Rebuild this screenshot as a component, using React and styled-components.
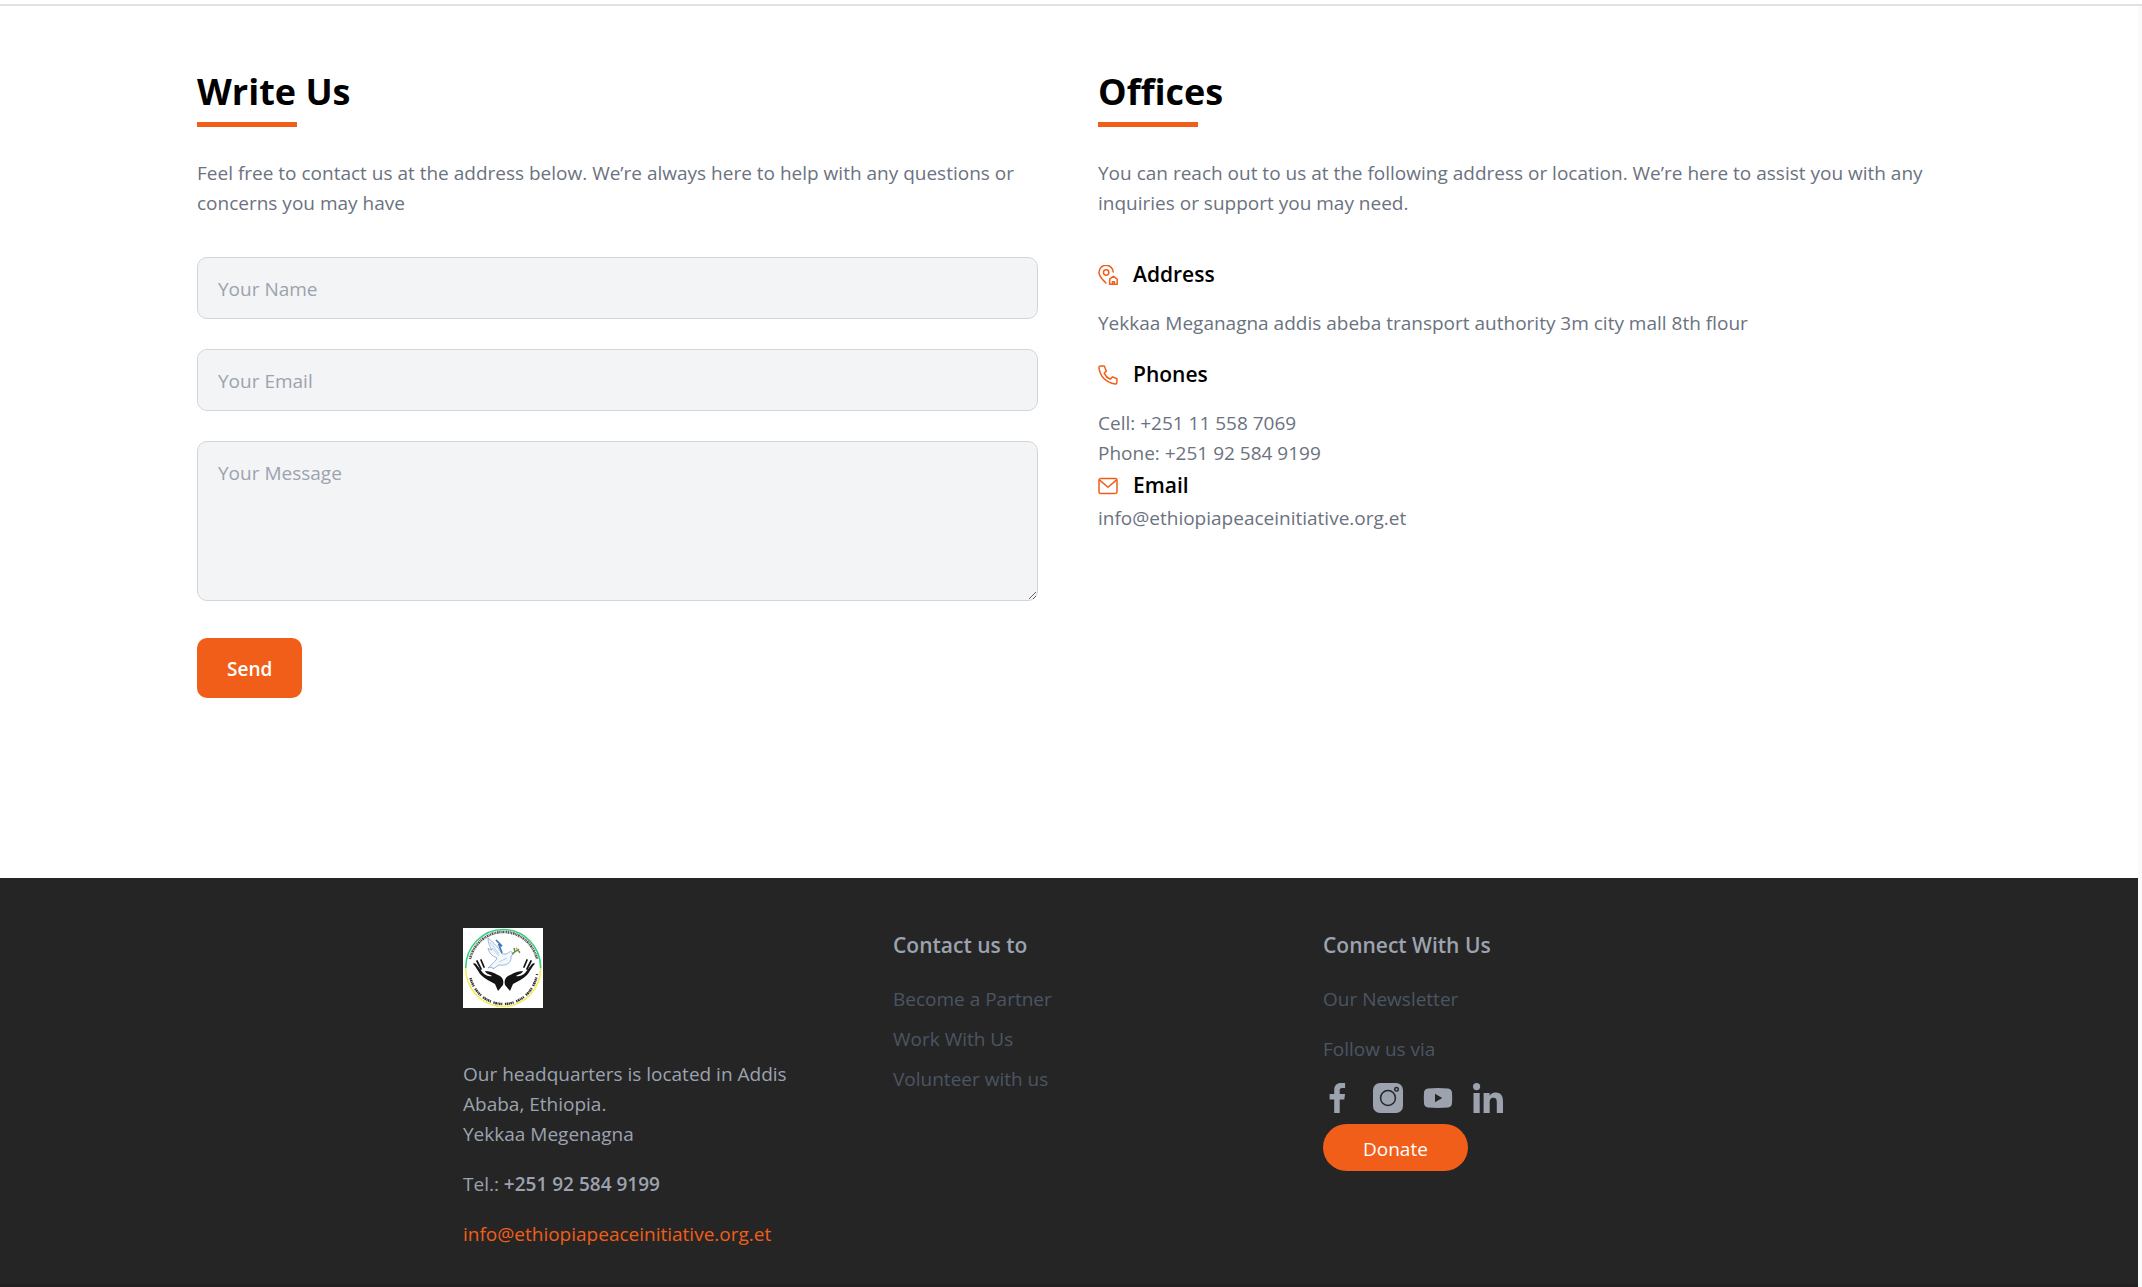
import React from "react";
import styled, { createGlobalStyle } from "styled-components";

const ORANGE = "#f15e19";

const GlobalStyle = createGlobalStyle`
  *, *::before, *::after { box-sizing: border-box; }
  body {
    margin: 0;
    background: #fff;
    font-family: "Segoe UI", "Open Sans", "Noto Sans", sans-serif;
    font-size: 19px;
    line-height: 30px;
  }
  h2, h3, p, ul { margin: 0; padding: 0; }
  input, textarea, button { font: inherit; }
  a { color: inherit; text-decoration: none; }
`;

const Page = styled.div`
  min-height: 100vh;
  display: flex;
  flex-direction: column;
`;

const TopRule = styled.div`
  height: 6px;
  border-bottom: 2px solid #e1e1e1;
`;

const Body = styled.div`
  flex: 1;
  display: flex;
  flex-direction: column;
  border-right: 4px solid #fafafa;
`;

const Contact = styled.main`
  width: 100%;
  max-width: 1824px;
  margin: 0 auto;
  padding: 61px 42px 180px 40px;
  display: grid;
  grid-template-columns: repeat(auto-fit, minmax(420px, 1fr));
  gap: 60px;
`;

const Title = styled.h2`
  font-size: 36px;
  line-height: 50px;
  font-weight: 700;
  color: #000;
  &::after {
    content: "";
    display: block;
    width: 100px;
    height: 5px;
    margin-top: 5px;
    background: ${ORANGE};
  }
`;

const Intro = styled.p`
  margin: 31px 0 39px;
  color: #6b7280;
`;

const Form = styled.form`
  display: flex;
  flex-direction: column;
  gap: 30px;
`;

const Field = styled.input`
  display: block;
  width: 100%;
  height: ${(p) => (p.$tall ? "160px" : "62px")};
  padding: 16px 20px 14px;
  border: 1px solid #d1d5db;
  border-radius: 10px;
  background: #f3f4f6;
  resize: vertical;
  &::placeholder { color: #9ca3af; opacity: 1; }
`;

const Button = styled.button`
  align-self: flex-start;
  border: 0;
  color: #fff;
  background: ${ORANGE};
  cursor: pointer;
`;

const SendButton = styled(Button)`
  margin-top: 7px;
  height: 60px;
  padding: 2px 30px 0;
  border-radius: 10px;
  font-weight: 600;
`;

const Offices = styled.section`
  color: #6b7280;
`;

const Heading = styled.h3`
  display: flex;
  align-items: center;
  gap: 15px;
  margin-bottom: ${(p) => (p.$tight ? "0" : "16px")};
  font-size: 21px;
  line-height: 35px;
  font-weight: 600;
  color: #000;
  svg { color: ${ORANGE}; }
`;

const Detail = styled.div`
  margin-bottom: ${(p) => (p.$last ? "0" : "19px")};
`;

const Footer = styled.footer`
  flex: 1;
  background: #252525;
  color: #9ca3af;
  border-bottom: 3px solid #231f20;
`;

const FooterGrid = styled.div`
  width: 100%;
  max-width: 1296px;
  margin: 0 auto;
  padding: 50px 40px 32px 42px;
  display: grid;
  grid-template-columns: repeat(auto-fit, minmax(280px, 1fr));
  gap: 76px;
`;

const FooterColumn = styled.div`
  display: flex;
  flex-direction: column;
  align-items: flex-start;
`;

const Logo = styled.svg`
  width: 80px;
  height: 80px;
  margin-bottom: 51px;
`;

const FooterText = styled.p`
  margin-bottom: 20px;
  b { font-weight: 600; }
`;

const MailLink = styled.a`
  && { color: ${ORANGE}; }
`;

const FooterTitle = styled.h3`
  margin: 0 0 21px;
  font-size: 21px;
  line-height: 35px;
  font-weight: 600;
`;

const Links = styled.ul`
  list-style: none;
  display: flex;
  flex-direction: column;
  gap: 10px;
  color: #4b5563;
`;

const Follow = styled.p`
  margin-top: 20px;
  color: #4b5563;
`;

const Social = styled.div`
  display: flex;
  gap: 20px;
  margin: 19px 0 11px;
  a { display: block; width: 30px; height: 30px; }
  svg { display: block; width: 30px; height: 30px; fill: #9ca3af; }
`;

const DonateButton = styled(Button)`
  height: 47px;
  padding: 2px 40px 0;
  border-radius: 24px;
`;

function LineIcon({ children }) {
  return (
    <svg width="20" height="20" viewBox="0 0 24 24" fill="none" stroke="currentColor" strokeWidth="1.8" strokeLinecap="round" strokeLinejoin="round" aria-hidden="true">
      {children}
    </svg>
  );
}

function Emblem() {
  return (
    <Logo viewBox="0 0 80 80" role="img" aria-label="Ethiopia Peace Initiative">
      <rect width="80" height="80" fill="#fff" />
      <path d="M2.700 40a37.500 38.500 0 0 1 75 0" fill="none" stroke="#35d07f" strokeWidth="1.600" />
      <path d="M2.700 40a37.500 38.500 0 0 0 75 0" fill="none" stroke="#f1ee5c" strokeWidth="1.600" />
      <path d="M7 31a34.500 35.500 0 0 1 67 0" fill="none" stroke="#555" strokeWidth="2.600" strokeDasharray="1.100 .7 1.700 .6 .8 .5" />
      <path d="M7.500 50a34 35 0 0 0 66.500-4" fill="none" stroke="#333" strokeWidth="2.400" strokeDasharray="1.400 .5 1.800 .5 1 .5 1.500 .6 1.200 2.600" />
      <path d="M39 26c-3-6-7-10-14-16 0 5 2 9 4 12-1 0-3-1-4-2 1 5 4 8 9 10-1 3-3 4-5 6l-4 4 4-1 1 2 6-4c7 1 12-2 12-7 0-3 2-4 3-4-2-3-5-3-7 0z" fill="#f4f8fc" stroke="#8fb0d3" strokeWidth=".9" />
      <path d="M33 12l6 6-3-1 3 8" fill="none" stroke="#3f75b5" strokeWidth="1.600" />
      <path d="M27 14l9 12M29 20l7 8M36 34l8-4" stroke="#a9c2dd" strokeWidth=".8" fill="none" />
      <path d="M49 26l7-5M52 24l-1-4M54 22l3 2" stroke="#5d943f" strokeWidth="1.500" fill="none" />
      <path d="M53 20l1 1M56 24l1 1" stroke="#d66b43" strokeWidth="1.300" />
      <g id="hand" fill="#141414">
        <path d="M10 36c2 1 4 6 8 11 4 4 9 6 14 9l3 7 5-6c1-4 0-7-3-9-4-2-9-5-15-5 1 3 4 3 7 5-3 1-7-1-9-3l-7-9c-1-1-3-1-3 0z" />
        <path d="M14 33l4 8M18 32l3 7" stroke="#141414" strokeWidth="1.700" strokeLinecap="round" />
      </g>
      <use href="#hand" transform="translate(82 0) scale(-1 1)" />
    </Logo>
  );
}

const socials = [
  { name: "Facebook", path: "M17.100.1v4.800h-2.800c-2.200 0-2.600 1-2.600 2.600V11h5.300l-.7 5.400h-4.600V30H6.200V16.400H1.600V11h4.600V7c0-4.600 2.800-7 6.900-7 2 0 3.600.1 4 .1z", x: 5 },
  { name: "Instagram", path: "M7 0h16a7 7 0 0 1 7 7v16a7 7 0 0 1-7 7H7a7 7 0 0 1-7-7V7a7 7 0 0 1 7-7zm8 6.800a8.200 8.200 0 1 0 0 16.400 8.200 8.200 0 0 0 0-16.400zm0 1.500a6.700 6.700 0 1 1 0 13.400 6.700 6.700 0 0 1 0-13.400zm8.500-4.500a2.500 2.500 0 1 0 0 5 2.500 2.500 0 0 0 0-5zm0 1.400a1.100 1.100 0 1 1 0 2.200 1.100 1.100 0 0 1 0-2.200z", x: 0 },
  { name: "YouTube", path: "M5 5.500q10-1 20 0 3.700.4 4 4 .4 5.500 0 11-.3 3.600-4 4-10 .8-20 0-3.700-.4-4-4-.4-5.500 0-11 .3-3.600 4-4zM12 10.800v8.400l7.200-4.200z", x: 0 },
  { name: "LinkedIn", path: "M3.600 0a3.600 3.600 0 1 1 0 7.200 3.600 3.600 0 0 1 0-7.200zM.5 10h6.200v20H.5zM10.600 10h6v2.700c1-1.800 3-3.200 6-3.200 6 0 7.400 4 7.400 9.300V30h-6.200v-10c0-2.400 0-5.300-3.300-5.300s-3.800 2.500-3.800 5.200V30h-6.100z", x: 0 },
];

export default function App() {
  return (
    <Page>
      <GlobalStyle />
      <TopRule />
      <Body>
        <Contact>
          <section>
            <Title>Write Us</Title>
            <Intro>
              Feel free to contact us at the address below. We’re always here to help with any questions or concerns you may have
            </Intro>
            <Form onSubmit={(e) => e.preventDefault()}>
              <Field type="text" aria-label="Your Name" placeholder="Your Name" />
              <Field type="email" aria-label="Your Email" placeholder="Your Email" />
              <Field as="textarea" $tall aria-label="Your Message" placeholder="Your Message" />
              <SendButton type="submit">Send</SendButton>
            </Form>
          </section>
          <Offices>
            <Title>Offices</Title>
            <Intro>
              You can reach out to us at the following address or location. We’re here to assist you with any inquiries or support you may need.
            </Intro>
            <Heading>
              <LineIcon>
                <path d="M9.500 21.500C6 18 1.200 14 1.200 9a8.500 8.500 0 0 1 17-.5" />
                <circle cx="9.800" cy="9" r="3.200" />
                <path d="M14 17l4.500-3.500L23 17v6h-9zM17.300 23v-3h2.400v3" />
              </LineIcon>
              Address
            </Heading>
            <Detail>Yekkaa Meganagna addis abeba transport authority 3m city mall 8th flour</Detail>
            <Heading>
              <LineIcon>
                <path d="M7.500 1.200H3C1.800 1.200 1 2.200 1.200 3.500 2.500 14 10 21.500 20.500 22.800c1.200.1 2.200-.8 2.200-2v-4.300l-5.200-2.300-3 2.800c-3-1.300-5.500-3.800-7-7L10 7.200z" />
              </LineIcon>
              Phones
            </Heading>
            <Detail $last>
              Cell: +251 11 558 7069
              <br />
              Phone: +251 92 584 9199
            </Detail>
            <Heading $tight>
              <LineIcon>
                <rect x="1.200" y="3" width="21.600" height="18" rx="2" />
                <path d="M2 5l10 8.500L22 5" />
              </LineIcon>
              Email
            </Heading>
            <Detail $last>info@ethiopiapeaceinitiative.org.et</Detail>
          </Offices>
        </Contact>
        <Footer>
          <FooterGrid>
            <FooterColumn>
              <Emblem />
              <FooterText>
                Our headquarters is located in Addis Ababa, Ethiopia.
                <br />
                Yekkaa Megenagna
              </FooterText>
              <FooterText>
                Tel.: <b>+251 92 584 9199</b>
              </FooterText>
              <MailLink href="mailto:info@ethiopiapeaceinitiative.org.et">info@ethiopiapeaceinitiative.org.et</MailLink>
            </FooterColumn>
            <FooterColumn>
              <FooterTitle>Contact us to</FooterTitle>
              <Links>
                <li><a href="#partner">Become a Partner</a></li>
                <li><a href="#work">Work With Us</a></li>
                <li><a href="#volunteer">Volunteer with us</a></li>
              </Links>
            </FooterColumn>
            <FooterColumn>
              <FooterTitle>Connect With Us</FooterTitle>
              <Links>
                <li><a href="#newsletter">Our Newsletter</a></li>
              </Links>
              <Follow>Follow us via</Follow>
              <Social>
                {socials.map((s) => (
                  <a key={s.name} href={"#" + s.name.toLowerCase()} aria-label={s.name}>
                    <svg viewBox={`${-s.x} 0 30 30`}>
                      <path fillRule="evenodd" d={s.path} />
                    </svg>
                  </a>
                ))}
              </Social>
              <DonateButton type="button">Donate</DonateButton>
            </FooterColumn>
          </FooterGrid>
        </Footer>
      </Body>
    </Page>
  );
}
